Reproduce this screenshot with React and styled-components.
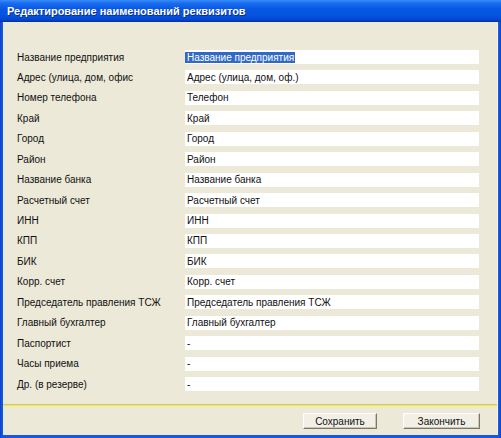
import React from "react";
import styled, { createGlobalStyle } from "styled-components";

const Global = createGlobalStyle`
  html, body { margin: 0; padding: 0; background: #ffffff; }
  #root { width: 501px; height: 438px; }
`;

const Frame = styled.div`
  box-sizing: border-box;
  width: 501px;
  height: 438px;
  display: flex;
  flex-direction: column;
  background: linear-gradient(to right, #0a3fc4 0, #1658e6 2px, #1658e6 calc(100% - 2px), #0a3fc4 100%);
  padding: 0 3px 3px 3px;
  font-family: "Liberation Sans", Arial, sans-serif;
`;

const TitleBar = styled.div`
  height: 22px;
  margin: 0 -3px;
  padding: 0 7px;
  display: flex;
  align-items: center;
  background: linear-gradient(to bottom, #3b8cf6 0, #1b6ef0 3px, #0757e3 9px, #0554e0 15px, #0449d6 19px, #023bbd 21px, #02318f 22px);
  color: #ffffff;
  font-weight: bold;
  font-size: 11px;
  letter-spacing: 0;
  text-shadow: 1px 1px 0 #0a2f8a;
`;

const Body = styled.div`
  flex: 1;
  display: flex;
  flex-direction: column;
  background: #ece9d8;
  border-right: 1px solid #f6f4dc;
`;

const Form = styled.div`
  display: grid;
  grid-template-columns: 168px 294px;
  row-gap: 6.44px;
  padding: 28px 0 0 14px;
  flex: 1;
  align-content: start;
`;

const Label = styled.div`
  height: 14px;
  display: flex;
  align-items: center;
  font-size: 10px;
  color: #101010;
  white-space: nowrap;
`;

const Field = styled.div`
  height: 14px;
  background: #ffffff;
  display: flex;
  align-items: center;
  padding-left: 2px;
  font-size: 10px;
  color: #101010;
  white-space: nowrap;
`;

const Selected = styled.span`
  background: #316ac5;
  color: #ffffff;
  line-height: 11px;
  padding-right: 1px;
  margin-left: -2px;
  padding-left: 2px;
`;

const Footer = styled.div`
  height: 30px;
  border-top: 1px solid #c9c39a;
  box-shadow: inset 0 1px 0 #f2ea55, inset 0 2px 0 #f5ef80;
  display: flex;
  justify-content: flex-end;
  align-items: center;
  gap: 26px;
  padding: 0 17px 0 0;
`;

const Button = styled.button`
  box-sizing: border-box;
  width: ${(p) => p.w}px;
  height: 16px;
  padding: 0;
  background: #f1efe6;
  border: 1px solid;
  border-color: #ffffff #7a776a #7a776a #ffffff;
  box-shadow: inset -1px -1px 0 #c9c6b8;
  font-family: "Liberation Sans", Arial, sans-serif;
  font-size: 10px;
  color: #101010;
  margin-top: 2px;
`;

const rows = [
  ["Название предприятия", "Название предприятия", true],
  ["Адрес (улица, дом, офис", "Адрес (улица, дом, оф.)"],
  ["Номер телефона", "Телефон"],
  ["Край", "Край"],
  ["Город", "Город"],
  ["Район", "Район"],
  ["Название банка", "Название банка"],
  ["Расчетный счет", "Расчетный счет"],
  ["ИНН", "ИНН"],
  ["КПП", "КПП"],
  ["БИК", "БИК"],
  ["Корр. счет", "Корр. счет"],
  ["Председатель правления ТСЖ", "Председатель правления ТСЖ"],
  ["Главный бухгалтер", "Главный бухгалтер"],
  ["Паспортист", "-"],
  ["Часы приема", "-"],
  ["Др. (в резерве)", "-"],
];

export default function App() {
  return (
    <>
      <Global />
      <Frame>
        <TitleBar>Редактирование наименований реквизитов</TitleBar>
        <Body>
          <Form>
            {rows.map(([label, value, sel]) => (
              <React.Fragment key={label}>
                <Label>{label}</Label>
                <Field>{sel ? <Selected>{value}</Selected> : value}</Field>
              </React.Fragment>
            ))}
          </Form>
          <Footer>
            <Button w={74}>Сохранить</Button>
            <Button w={77}>Закончить</Button>
          </Footer>
        </Body>
      </Frame>
    </>
  );
}
